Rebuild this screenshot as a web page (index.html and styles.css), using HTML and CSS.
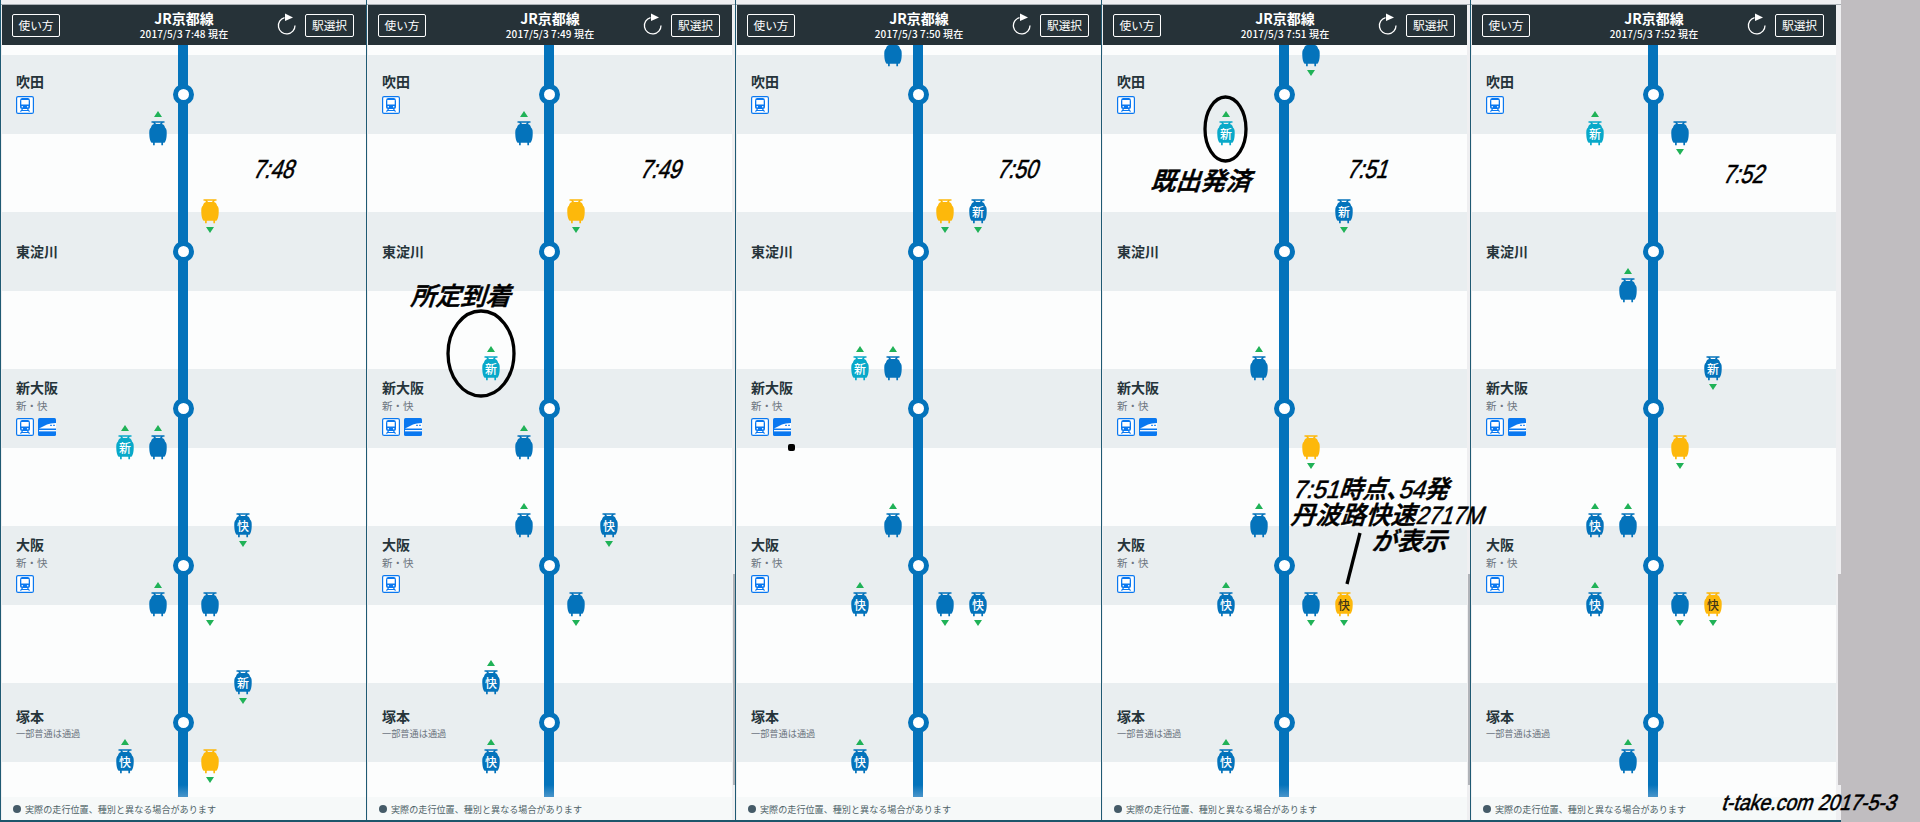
FILE: index.html
```
<!DOCTYPE html>
<html lang="ja">
<head>
    <meta charset="UTF-8">
    <meta name="viewport" content="width=device-width, initial-scale=1.0">
    <title>JR京都線</title>
    <link rel="stylesheet" href="styles.css">
</head>
<body>
    <svg class="sprite" width="0" height="0">
        <symbol id="reload" viewBox="0 0 20 24">
            <path d="M7.5 4.6A8.3 8.3 0 1 0 18 12.5" fill="none" stroke="#fff" stroke-width="1.3"/>
            <path d="M8 .4L16 4.4L8 8Z" fill="#fff"/>
        </symbol>
        <symbol id="train" viewBox="0 0 18 25">
            <path d="M2.5 .9H15.5M4.5 1L6.5 3.5M13.5 1L11.5 3.5" fill="none" stroke="currentColor" stroke-width="1.5"/>
            <path d="M5.5 3H12.5C14.5 3 15.5 4.5 16 6.5C17.8 8 17.8 10 17.7 13.5C17.6 17 17 19.8 15.5 21.8H2.5C1 19.8 .4 17 .3 13.5C.2 10 .2 8 2 6.5C2.5 4.5 3.5 3 5.5 3Z" fill="currentColor"/>
            <path d="M4.9 21V24.3M13.2 21V24.3" stroke="currentColor" stroke-width="1.7"/>
        </symbol>
        <symbol id="rail" viewBox="0 0 18 18">
            <rect x=".6" y=".6" width="16.8" height="16.8" rx="1.5" fill="#fff" stroke="#0a78f0" stroke-width="1.2"/>
            <path d="M6 2H12Q14 2.2 14 5V11Q14 13 12 13H6Q4 13 4 11V5Q4 2.2 6 2Z" fill="#0a78f0"/>
            <path d="M5.3 4H12.7V8.5H5.3Z" fill="#fff"/>
            <circle cx="6.3" cy="10.8" r=".8" fill="#fff"/>
            <circle cx="11.7" cy="10.8" r=".8" fill="#fff"/>
            <path d="M6.5 13L4.5 15.7M11.5 13L13.5 15.7M5.5 14.5H12.5" stroke="#0a78f0" stroke-width="1.2"/>
        </symbol>
        <symbol id="shinkansen" viewBox="0 0 18 18">
            <rect width="18" height="18" rx="1.5" fill="#0a78f0"/>
            <path d="M1 10.5Q5 8.5 9 6.5Q12 5.2 18 5V10.500Z" fill="#fff"/>
            <path d="M12 7.300H14M15 7.3H17" stroke="#0a78f0"/>
            <path d="M1 12.7H18" stroke="#fff" stroke-width="1.3"/>
        </symbol>
    </svg>

    <main class="board" id="board"></main>

    <div class="notes">
        <p class="note time-48">7:48</p>
        <p class="note time-49">7:49</p>
        <p class="note time-50">7:50</p>
        <p class="note time-51">7:51</p>
        <p class="note time-52">7:52</p>
        <p class="note arrived">所定到着</p>
        <p class="note departed">既出発済</p>
        <p class="note tanba">7:51時点、54発</p>
        <p class="note tanba-2">丹波路快速<span class="number">2717M</span></p>
        <p class="note tanba-3">が表示</p>
        <p class="note credit">t-take.com 2017-5-3</p>
        <svg class="marks" viewBox="0 0 1920 822">
            <ellipse cx="481" cy="353.5" rx="33" ry="42.5"/>
            <ellipse cx="1225.5" cy="129" rx="20.5" ry="32"/>
            <path d="M1360 533L1347 584"/>
            <rect class="dot" x="788" y="444" width="7" height="7" rx="2"/>
        </svg>
    </div>

    <script src="script.js"></script>
</body>
</html>
```
FILE: styles.css
```
body {
    margin: 0;
    width: 1920px;
    height: 822px;
    overflow: hidden;
    background-color: #c0bdc0;
    font-family: "Noto Sans CJK JP", sans-serif;
    color: #26343a;
}

.sprite {
    position: absolute;
}

.board {
    display: grid;
    grid-template-columns: 366px 369px 366px 369px 371px;
    width: 1841px;
    height: 820px;
    background-color: #efeff1;
    border-bottom: 2px solid #1c566b;
}

.phone {
    position: relative;
    display: flex;
    flex-direction: column;
    box-sizing: border-box;
    height: 820px;
    padding: 5px 0 0 1px;
    border-left: 1px solid #1f5a73;
    background-image: linear-gradient(#a9afb4, #a9afb4);
    background-size: 100% 1px;
    background-position: 0 4px;
    background-repeat: no-repeat;
}

/* scrollbar at the window edge */
.phone:nth-child(even)::after,
.phone:last-child::after {
    content: "";
    position: absolute;
    right: 0;
    top: 574px;
    width: 2px;
    height: 211px;
    background-color: #b0b3b8;
}

.phone:last-child::after {
    width: 3px;
    background-color: #c0bdc0;
}

.bar {
    display: grid;
    grid-template-columns: 48px 1fr 20px 49px;
    align-items: center;
    box-sizing: border-box;
    width: 364px;
    height: 40px;
    padding: 0 11px;
    background-color: #263238;
    color: #fff;
}

.btn {
    box-sizing: border-box;
    height: 23px;
    border: 1px solid #fff;
    border-radius: 2px;
    font-size: 11.7px;
    line-height: 19px;
    text-align: center;
    white-space: nowrap;
}

.heading {
    padding-left: 21px;
    text-align: center;
    white-space: nowrap;
}

.heading h1 {
    margin: 0;
    font-size: 14px;
    line-height: 15px;
    font-weight: 700;
}

.heading p {
    margin: 1px 0 0;
    font-size: 10px;
    line-height: 13px;
    font-weight: 500;
    letter-spacing: 0.12px;
}

.reload {
    width: 20px;
    height: 24px;
    margin-left: -9px;
}

.bar .btn {
    position: relative;
    left: -1px;
}

.track {
    position: relative;
    width: 364px;
    height: 752px;
    overflow: hidden;
    padding-top: 10px;
    box-sizing: border-box;
    background-color: #fcfdfd;
}

.station {
    box-sizing: border-box;
    height: 78.5px;
    margin-bottom: 78.5px;
    padding-left: 14px;
    display: flex;
    flex-direction: column;
    background-color: #e9eef0;
}

.station h2 {
    margin: 0;
    font-size: 14px;
    line-height: 20px;
    font-weight: 600;
}

.station p {
    margin: 0;
    font-size: 10.5px;
    line-height: 17px;
    color: #6d7580;
}

.station .passing {
    font-size: 9.2px;
    line-height: 14px;
}

.suita {
    padding-top: 16px;
}

.tsukamoto {
    padding-top: 23px;
}

.higashi {
    padding-top: 29px;
}

.shinosaka, .osaka {
    padding-top: 8px;
}

.stops {
    padding-bottom: 1px;
}

.icons {
    display: flex;
    gap: 4px;
    margin-top: 3px;
}

.suita .icons {
    margin-top: 5px;
}

.icons svg {
    width: 18px;
    height: 18px;
}

.line {
    position: absolute;
    left: 176px;
    top: 0;
    width: 10px;
    height: 752px;
    background: linear-gradient(#0473bb 740px, #4a95ca);
}

.stop {
    position: absolute;
    left: 170.5px;
    width: 11px;
    height: 11px;
    border: 5px solid #0473bb;
    border-radius: 50%;
    background-color: #fff;
}

.train {
    position: absolute;
    width: 18px;
    height: 25px;
    color: #0473bb;
}

.train svg {
    display: block;
    width: 18px;
    height: 25px;
}

.train span {
    position: absolute;
    left: 0;
    top: 4px;
    width: 18px;
    font-size: 12px;
    line-height: 18px;
    font-weight: 500;
    text-align: center;
    color: #fff;
}

.train.cyan {
    color: #09a9c9;
}

.train.yellow {
    color: #fdb80b;
}

.train.yellow span {
    color: #3d3418;
}

.train::after {
    content: "";
    position: absolute;
    left: 5px;
    border: 4px solid transparent;
}

.train.up::after {
    top: -10px;
    border-top: 0;
    border-bottom: 6px solid #20b257;
}

.train.down::after {
    top: 28px;
    border-bottom: 0;
    border-top: 6px solid #20b257;
}

.remark {
    display: flex;
    align-items: center;
    gap: 4px;
    width: 364px;
    height: 23px;
    padding: 0 0 0 11px;
    box-sizing: border-box;
    background-color: #f6f9f9;
    font-size: 9.1px;
    color: #4d6166;
}

.remark::before {
    content: "";
    width: 8px;
    height: 8px;
    border-radius: 50%;
    background-color: #455b68;
}

/* slanted notes over the five screens */
.note {
    position: absolute;
    margin: 0;
    color: #000;
    font-family: "Liberation Sans", "Noto Sans CJK JP", sans-serif;
    font-size: 26px;
    line-height: 26px;
    font-weight: 500;
    white-space: nowrap;
    transform: skewX(-18deg) scaleX(0.8);
    transform-origin: 0 100%;
    -webkit-text-stroke: 0.6px #000;
}

.time-48 { left: 251px; top: 156px; }
.time-49 { left: 638px; top: 156px; }
.time-50 { left: 995px; top: 156px; }
.time-51 { left: 1345px; top: 156px; }
.time-52 { left: 1721px; top: 161px; }
.arrived { left: 409px; top: 283px; }
.departed { left: 1149px; top: 168px; }
.tanba { left: 1291px; top: 476px; }
.tanba-2 { left: 1289px; top: 502px; }
.tanba-3 { left: 1370px; top: 528px; }
.credit { left: 1719px; top: 790px; }

.arrived, .departed, .tanba, .tanba-2, .tanba-3 {
    font-size: 25px;
    transform: skewX(-18deg);
}

.tanba {
    font-feature-settings: "palt";
    transform: skewX(-18deg) scaleX(0.95);
}

.number {
    display: inline-block;
    transform: scaleX(0.88);
    transform-origin: 0 100%;
}

.credit {
    font-size: 22px;
    transform: skewX(-18deg) scaleX(0.885);
}

.marks {
    position: absolute;
    left: 0;
    top: 0;
    width: 1920px;
    height: 822px;
    fill: none;
    stroke: #000;
    stroke-width: 3.3;
    pointer-events: none;
}

.marks .dot {
    fill: #000;
    stroke: none;
}
```
FILE: script.js
```
const board = document.getElementById('board');
const slotHeight = 78.5;
const columns = { L2: 123.5, L1: 156.5, R1: 208, R2: 241 };

const stations = [
    { name: '吹田', cls: 'suita', icons: ['rail'] },
    { name: '東淀川', cls: 'higashi', icons: [] },
    { name: '新大阪', cls: 'shinosaka', stops: '新・快', icons: ['rail', 'shinkansen'] },
    { name: '大阪', cls: 'osaka', stops: '新・快', icons: ['rail'] },
    { name: '塚本', cls: 'tsukamoto', stops: '一部普通は通過', passing: true, icons: [] }
];

// column, slot, colour, label
const screens = [
    { time: '7:48', trains: [
        ['L1', 1, 'blue'], ['R1', 2, 'yellow'], ['L2', 5, 'cyan', '新'], ['L1', 5, 'blue'], ['R2', 6, 'blue', '快'],
        ['L1', 7, 'blue'], ['R1', 7, 'blue'], ['R2', 8, 'blue', '新'], ['L2', 9, 'blue', '快'], ['R1', 9, 'yellow']
    ] },
    { time: '7:49', trains: [
        ['L1', 1, 'blue'], ['R1', 2, 'yellow'], ['L2', 4, 'cyan', '新'], ['L1', 5, 'blue'], ['L1', 6, 'blue'],
        ['R2', 6, 'blue', '快'], ['R1', 7, 'blue'], ['L2', 8, 'blue', '快'], ['L2', 9, 'blue', '快']
    ] },
    { time: '7:50', trains: [
        ['L1', 0, 'blue'], ['R1', 2, 'yellow'], ['R2', 2, 'blue', '新'], ['L2', 4, 'cyan', '新'], ['L1', 4, 'blue'],
        ['L1', 6, 'blue'], ['L2', 7, 'blue', '快'], ['R1', 7, 'blue'], ['R2', 7, 'blue', '快'], ['L2', 9, 'blue', '快']
    ] },
    { time: '7:51', trains: [
        ['R1', 0, 'blue'], ['L2', 1, 'cyan', '新'], ['R2', 2, 'blue', '新'], ['L1', 4, 'blue'], ['R1', 5, 'yellow'],
        ['L1', 6, 'blue'], ['L2', 7, 'blue', '快'], ['R1', 7, 'blue'], ['R2', 7, 'yellow', '快'], ['L2', 9, 'blue', '快']
    ] },
    { time: '7:52', trains: [
        ['L2', 1, 'cyan', '新'], ['R1', 1, 'blue'], ['L1', 3, 'blue'], ['R2', 4, 'blue', '新'], ['R1', 5, 'yellow'],
        ['L2', 6, 'blue', '快'], ['L1', 6, 'blue'], ['L2', 7, 'blue', '快'], ['R1', 7, 'blue'], ['R2', 7, 'yellow', '快'], ['L1', 9, 'blue']
    ] }
];

function icon(name) {
    return `<svg><use href="#${name}"/></svg>`;
}

function drawStation(s) {
    const stops = s.stops ? `<p class="${s.passing ? 'passing' : 'stops'}">${s.stops}</p>` : '';
    const icons = s.icons.length ? `<div class="icons">${s.icons.map(icon).join('')}</div>` : '';
    return `<section class="station ${s.cls}"><h2>${s.name}</h2>${stops}${icons}</section>`;
}

function drawTrain([column, slot, colour, label]) {
    const dir = column[0] === 'L' ? 'up' : 'down';
    const x = Math.floor(columns[column] - 9);
    const y = Math.floor(10 + slot * slotHeight - 12.5);
    return `<div class="train ${colour} ${dir}" style="left:${x}px;top:${y}px">${icon('train')}${label ? `<span>${label}</span>` : ''}</div>`;
}

function drawScreen(screen) {
    const stops = stations.map((s, i) => `<i class="stop" style="top:${39 + i * slotHeight * 2}px"></i>`).join('');
    return `<article class="phone">
        <header class="bar">
            <div class="btn">使い方</div>
            <div class="heading"><h1>JR京都線</h1><p>2017/5/3 ${screen.time} 現在</p></div>
            <svg class="reload"><use href="#reload"/></svg>
            <div class="btn">駅選択</div>
        </header>
        <div class="track">
            ${stations.map(drawStation).join('')}
            <div class="line"></div>${stops}
            ${screen.trains.map(drawTrain).join('')}
        </div>
        <footer class="remark">実際の走行位置、種別と異なる場合があります</footer>
    </article>`;
}

board.innerHTML = screens.map(drawScreen).join('');
```
